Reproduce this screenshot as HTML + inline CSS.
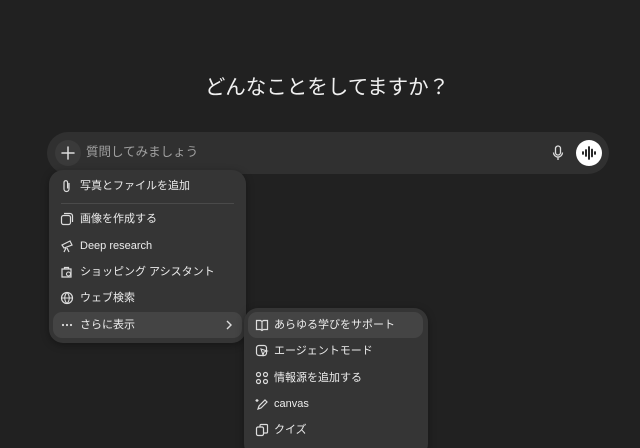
<!DOCTYPE html><html><head><meta charset="utf-8"><style>
*{margin:0;padding:0;box-sizing:border-box}
html,body{width:640px;height:448px;overflow:hidden}
body{background:#212121;position:relative;font-family:"Liberation Sans","Noto Sans CJK JP",sans-serif;color:#ececec}
.t{position:absolute;top:70px;left:0;width:654px;text-align:center;font-size:20.5px;color:#f0f0f0}
.bar{position:absolute;left:47px;top:132px;width:562px;height:42px;border-radius:21px;background:#303030}
.plus{position:absolute;left:55px;top:140px;width:26px;height:26px;border-radius:13px;background:#3a3a3a}
.ph{position:absolute;left:86px;top:145px;font-size:12.5px;line-height:14px;color:#a0a0a0}
.send{position:absolute;left:576px;top:140px;width:26px;height:26px;border-radius:13px;background:#fff}
.m{position:absolute;background:#353535;border-radius:14px;box-shadow:0 2px 8px rgba(0,0,0,.35)}
.it{position:absolute;font-size:11px;line-height:14px;color:#ececec;white-space:nowrap}
.hl{position:absolute;background:#444;border-radius:9px}
svg{position:absolute}
</style></head><body>
<div class="t">どんなことをしてますか？</div>
<div class="bar"></div>
<div class="plus"></div>
<svg style="left:61px;top:146px" width="14" height="14" viewBox="0 0 14 14"><path d="M7 1v12M1 7h12" stroke="#ddd" stroke-width="1.5" stroke-linecap="round"/></svg>
<div class="ph">質問してみましょう</div>
<svg style="left:552px;top:145px" width="12" height="16" viewBox="0 0 12 16"><rect x="3.5" y="1" width="5" height="9" rx="2.5" fill="none" stroke="#ddd" stroke-width="1.3"/><path d="M1.5 7.5a4.5 4.5 0 0 0 9 0M6 12v3" stroke="#ddd" stroke-width="1.3" fill="none"/></svg>
<div class="send"></div>
<svg style="left:581px;top:146px" width="16" height="14" viewBox="0 0 16 14"><path d="M2 6v2M5 4v6M8 1v12M11 3.5v7M14 6v2" stroke="#111" stroke-width="1.8" stroke-linecap="round"/></svg>

<div class="m" style="left:49px;top:170px;width:197px;height:173px"></div>
<div style="position:absolute;left:61px;top:203px;width:173px;height:1px;background:#4a4a4a"></div>
<div class="hl" style="left:53px;top:312px;width:189px;height:26px"></div>
<svg style="left:61px;top:179px" width="12" height="14" viewBox="0 0 12 14"><path d="M8 4v6a2.5 2.5 0 0 1-5 0V3.5a1.8 1.8 0 0 1 3.6 0V9.5" fill="none" stroke="#ddd" stroke-width="1.2"/></svg>
<div class="it" style="left:80px;top:179px">写真とファイルを追加</div>
<svg style="left:60px;top:212px" width="14" height="14" viewBox="0 0 14 14"><rect x="1.5" y="3.5" width="9" height="9" rx="2" fill="none" stroke="#ddd" stroke-width="1.2"/><path d="M4 1.5h6a2.5 2.5 0 0 1 2.5 2.5v6" fill="none" stroke="#ddd" stroke-width="1.2"/></svg>
<div class="it" style="left:80px;top:212px">画像を作成する</div>
<svg style="left:60px;top:239px" width="14" height="14" viewBox="0 0 14 14"><path d="M2 6l8-4 2 4-8 3zM6 9l-2 4M7 9l2 4" fill="none" stroke="#ddd" stroke-width="1.2"/></svg>
<div class="it" style="left:80px;top:239px">Deep research</div>
<svg style="left:60px;top:265px" width="14" height="14" viewBox="0 0 14 14"><path d="M2 4h9v8H2zM4.5 4V2.5h4V4" fill="none" stroke="#ddd" stroke-width="1.2"/><circle cx="8.5" cy="9" r="2" fill="#353535" stroke="#ddd" stroke-width="1.1"/></svg>
<div class="it" style="left:80px;top:265px">ショッピング アシスタント</div>
<svg style="left:60px;top:291px" width="14" height="14" viewBox="0 0 14 14"><circle cx="7" cy="7" r="5.5" fill="none" stroke="#ddd" stroke-width="1.2"/><path d="M1.5 7h11M7 1.5c-3 3-3 8 0 11M7 1.5c3 3 3 8 0 11" fill="none" stroke="#ddd" stroke-width="1.1"/></svg>
<div class="it" style="left:80px;top:291px">ウェブ検索</div>
<svg style="left:61px;top:322px" width="12" height="6" viewBox="0 0 12 6"><circle cx="2" cy="3" r="1.1" fill="#ddd"/><circle cx="6" cy="3" r="1.1" fill="#ddd"/><circle cx="10" cy="3" r="1.1" fill="#ddd"/></svg>
<div class="it" style="left:80px;top:318px">さらに表示</div>
<svg style="left:225px;top:319px" width="8" height="12" viewBox="0 0 8 12"><path d="M2 2l4 4-4 4" fill="none" stroke="#ddd" stroke-width="1.4"/></svg>

<div class="m" style="left:244px;top:308px;width:184px;height:150px"></div>
<div class="hl" style="left:248px;top:312px;width:175px;height:26px"></div>
<svg style="left:255px;top:318px" width="14" height="14" viewBox="0 0 14 14"><path d="M1.5 2.5h4l1.5 1 1.5-1h4v9h-4l-1.5 1-1.5-1h-4zM7 3.5v9" fill="none" stroke="#ddd" stroke-width="1.2"/></svg>
<div class="it" style="left:274px;top:318px">あらゆる学びをサポート</div>
<svg style="left:255px;top:344px" width="14" height="14" viewBox="0 0 14 14"><rect x="1.5" y="1.5" width="10" height="10" rx="2.5" fill="none" stroke="#ddd" stroke-width="1.2"/><path d="M6 5l6 2-3 1-1 3z" fill="#353535" stroke="#ddd" stroke-width="1.1"/></svg>
<div class="it" style="left:274px;top:344px">エージェントモード</div>
<svg style="left:255px;top:371px" width="14" height="14" viewBox="0 0 14 14"><g fill="none" stroke="#ddd" stroke-width="1.2"><circle cx="3.5" cy="3.5" r="2"/><circle cx="10.5" cy="3.5" r="2"/><circle cx="3.5" cy="10.5" r="2"/><circle cx="10.5" cy="10.5" r="2"/></g></svg>
<div class="it" style="left:274px;top:371px">情報源を追加する</div>
<svg style="left:255px;top:397px" width="14" height="14" viewBox="0 0 14 14"><path d="M3 12l1-3 6-6 2 2-6 6zM2 2v3M0.5 3.5h3" fill="none" stroke="#ddd" stroke-width="1.2"/></svg>
<div class="it" style="left:274px;top:397px">canvas</div>
<svg style="left:255px;top:423px" width="14" height="14" viewBox="0 0 14 14"><rect x="1.5" y="4" width="7" height="8.5" rx="1.5" fill="none" stroke="#ddd" stroke-width="1.2"/><path d="M5 4V2.5A1 1 0 0 1 6 1.5h5.5a1 1 0 0 1 1 1V9a1 1 0 0 1-1 1H8.5" fill="none" stroke="#ddd" stroke-width="1.2"/></svg>
<div class="it" style="left:274px;top:423px">クイズ</div>
</body></html>
